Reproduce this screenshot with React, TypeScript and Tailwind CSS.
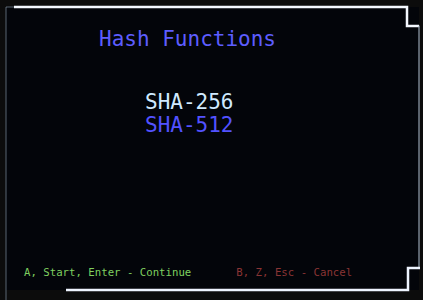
import React from 'react';

const mono = { fontFamily: '"DejaVu Sans Mono", "Liberation Mono", monospace' };

function Bezel() {
  return (
    <svg className="pointer-events-none absolute inset-0" width="423" height="300" viewBox="0 0 423 300">
      <path d="M6 300 L6 7 L407 7 L407 26 L420 26" fill="none" stroke="#8fa4b8" strokeWidth="1" opacity="0.6" />
      <path d="M14 7 L407 7 L407 26 L419 26" fill="none" stroke="#f4f8ff" strokeWidth="2.5" />
      <path d="M419 26 L419 268" fill="none" stroke="#a8b8c8" strokeWidth="1.5" opacity="0.7" />
      <path d="M66 290 L408 290 L408 268 L420 268" fill="none" stroke="#eef4ff" strokeWidth="2.5" />
    </svg>
  );
}

export default function App() {
  return (
    <div className="relative h-[300px] w-[423px] overflow-hidden bg-[#0c0c0c]" style={mono}>
      <div className="absolute left-[6px] top-[7px] h-[283px] w-[413px] bg-[#03050a]" />
      <div className="relative flex h-full flex-col">
        <h1 className="mt-[27px] pl-[99px] text-[21px] leading-[24px] text-[#5d5dff]">Hash Functions</h1>
        <div className="mt-[40px] flex flex-col pl-[145px] text-[21px] leading-[23px]">
          <span className="text-[#d0eaff]">SHA-256</span>
          <span className="text-[#5252ff]">SHA-512</span>
        </div>
        <div className="mt-auto mb-[20px] flex pl-[24px] text-[10.7px] leading-[14px]">
          <span className="text-[#7fd060]">A, Start, Enter - Continue</span>
          <span className="ml-[45px] text-[#8a3434]">B, Z, Esc - Cancel</span>
        </div>
      </div>
      <Bezel />
    </div>
  );
}
